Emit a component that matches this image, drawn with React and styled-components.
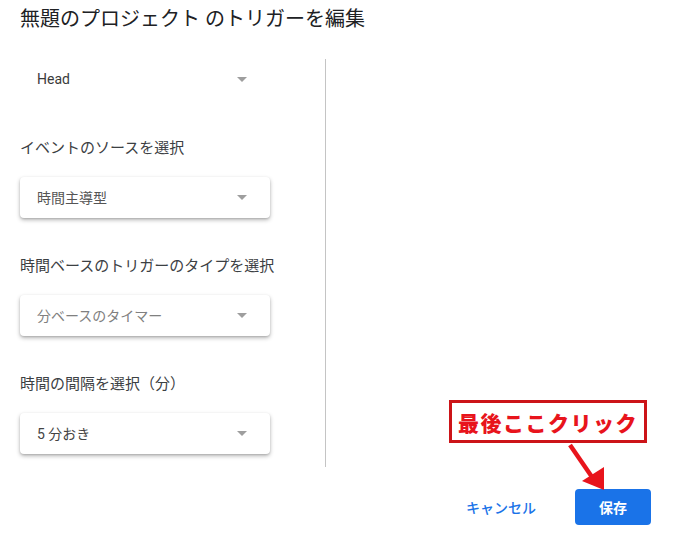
import React from "react";
import styled, { createGlobalStyle } from "styled-components";

const GlobalStyle = createGlobalStyle`
  body {
    margin: 0;
    background: #ffffff;
    font-family: Roboto, "Noto Sans CJK JP", sans-serif;
  }
`;

const sections = [
  { label: "イベントのソースを選択", value: "時間主導型", tone: "#555555" },
  { label: "時間ベースのトリガーのタイプを選択", value: "分ベースのタイマー", tone: "#808080" },
  { label: "時間の間隔を選択（分）", value: "5 分おき", tone: "#444444" },
];

const App = () => {
  return (
    <>
      <GlobalStyle />
      <Page>
        <Title>無題のプロジェクト のトリガーを編集</Title>
        <Body>
          <LeftColumn>
            <Select flat>
              <SelectText tone="#3a3a3a">Head</SelectText>
              <Caret />
            </Select>
            {sections.map((s) => (
              <Section key={s.label}>
                <Label>{s.label}</Label>
                <Select>
                  <SelectText tone={s.tone}>{s.value}</SelectText>
                  <Caret />
                </Select>
              </Section>
            ))}
          </LeftColumn>
        </Body>
        <Footer>
          <TextButton>キャンセル</TextButton>
          <SaveButton>保存</SaveButton>
        </Footer>
        <Callout>最後ここクリック</Callout>
        <Arrow width="60" height="70" viewBox="0 0 60 70">
          <line x1="12" y1="2" x2="34" y2="34" stroke="#e8141c" strokeWidth="4.5" />
          <polygon points="24,38 46,24 46,47" fill="#e8141c" />
        </Arrow>
      </Page>
    </>
  );
};

const Page = styled.div`
  position: relative;
  width: 680px;
  height: 547px;
  padding: 7px 0 0 20px;
  box-sizing: border-box;
  overflow: hidden;
`;

const Title = styled.div`
  font-size: 20px;
  line-height: 24px;
  color: #202124;
`;

const Body = styled.div`
  display: flex;
  margin-top: 28px;
`;

const LeftColumn = styled.div`
  width: 306px;
  height: 408px;
  border-right: 1px solid #c4c4c4;
  box-sizing: border-box;
`;

const Section = styled.div`
  display: flex;
  flex-direction: column;
  margin-top: 38px;
`;

const Label = styled.div`
  font-size: 15px;
  line-height: 20px;
  color: #3c4043;
  margin-bottom: 19px;
`;

const Select = styled.div`
  width: 250px;
  height: 41px;
  box-sizing: border-box;
  padding: 0 23px 2px 17px;
  display: flex;
  align-items: center;
  justify-content: space-between;
  border-radius: 4px;
  background: #ffffff;
  box-shadow: ${({ flat }) =>
    flat ? "none" : "0 2px 4px rgba(0,0,0,0.28), 0 1px 2px rgba(0,0,0,0.12)"};
`;

const SelectText = styled.span`
  font-size: 14px;
  color: ${({ tone }) => tone};
`;

const Caret = styled.span`
  width: 0;
  height: 0;
  margin-top: 1px;
  border-left: 5px solid transparent;
  border-right: 5px solid transparent;
  border-top: 5px solid #9e9e9e;
`;

const Footer = styled.div`
  display: flex;
  justify-content: flex-end;
  align-items: center;
  gap: 23px;
  margin-top: 22px;
  padding-right: 29px;
`;

const TextButton = styled.div`
  height: 36px;
  padding: 0 16px;
  display: flex;
  align-items: center;
  font-size: 14px;
  font-weight: 500;
  color: #1a73e8;
`;

const SaveButton = styled.div`
  width: 76px;
  height: 36px;
  display: flex;
  align-items: center;
  justify-content: center;
  border-radius: 4px;
  background: #1a73e8;
  color: #ffffff;
  font-size: 14px;
  font-weight: 700;
`;

const Callout = styled.div`
  position: absolute;
  left: 449px;
  top: 400px;
  width: 198px;
  height: 43px;
  box-sizing: border-box;
  border: 3px solid #cc1418;
  background: #ffffff;
  display: flex;
  align-items: center;
  justify-content: center;
  font-family: "Noto Sans CJK JP", sans-serif;
  font-size: 21px;
  font-weight: 900;
  letter-spacing: 1.5px;
  color: #e8141c;
`;

const Arrow = styled.svg`
  position: absolute;
  left: 558px;
  top: 443px;
`;

export default App;
